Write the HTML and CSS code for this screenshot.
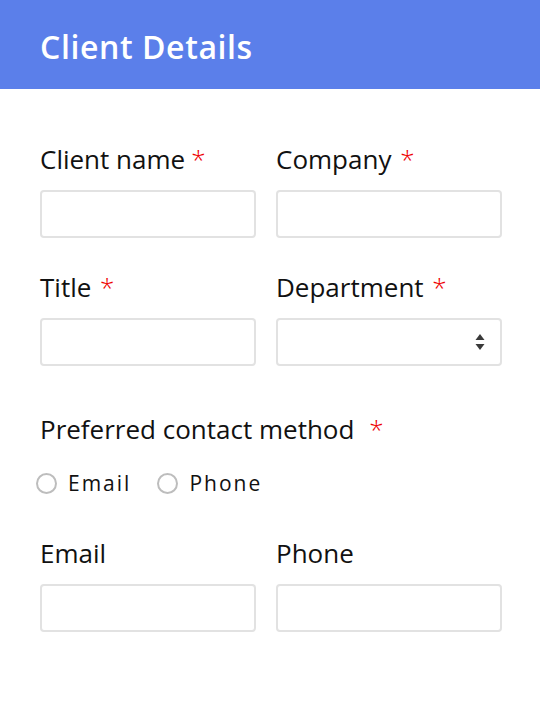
FILE: index.html
```html
<!DOCTYPE html>
<html>

<head>
  <meta charset="utf-8" />
  <title>Client Details</title>
  <link rel="stylesheet" href="styles.css">
</head>

<body>
  <div class="header">
    <h1>Client Details</h1>
  </div>

  <form class="form">
    <div class="row">
      <div class="field">
        <label>Client name<span class="req req-tight">*</span></label>
        <input type="text" class="box box-narrow" />
      </div>
      <div class="field">
        <label>Company <span class="req">*</span></label>
        <input type="text" class="box box-wide" />
      </div>
    </div>

    <div class="row">
      <div class="field">
        <label>Title <span class="req">*</span></label>
        <input type="text" class="box box-narrow" />
      </div>
      <div class="field">
        <label>Department <span class="req">*</span></label>
        <div class="box box-wide select">
          <svg class="arrows" width="10" height="18" viewBox="0 0 10 18">
            <path d="M5 1 L9.5 7 H0.5 Z" fill="#3a3a3a" />
            <path d="M5 17 L9.5 11 H0.5 Z" fill="#3a3a3a" />
          </svg>
        </div>
      </div>
    </div>

    <div class="contact">
      <label>Preferred contact method <span class="req req-wide">*</span></label>
      <div class="radios">
        <span class="radio"><i class="circle"></i>Email</span>
        <span class="radio"><i class="circle"></i>Phone</span>
      </div>
    </div>

    <div class="row">
      <div class="field">
        <label>Email</label>
        <input type="text" class="box box-narrow" />
      </div>
      <div class="field">
        <label>Phone</label>
        <input type="text" class="box box-wide" />
      </div>
    </div>
  </form>
</body>

</html>
```

FILE: styles.css
```css
body {
  margin: 0;
  font-family: "Open Sans", "Noto Sans", sans-serif;
  color: #111;
  background: #fff;
}

.header {
  box-sizing: border-box;
  height: 89px;
  background: #5b7fea;
  padding: 3px 40px 0;
  display: flex;
  align-items: center;
}

.header h1 {
  margin: 0;
  color: #fff;
  font-size: 32px;
  font-weight: 600;
  letter-spacing: 0.6px;
}

.form {
  padding: 53px 40px 0;
}

.row {
  display: grid;
  grid-template-columns: 216px 226px;
  column-gap: 20px;
  margin-bottom: 32px;
}

.field label,
.contact label {
  display: block;
  font-size: 26px;
  line-height: 34px;
  margin-bottom: 14px;
}

.req {
  color: #e00;
  font-weight: 300;
  margin-left: 2px;
}

.req-tight {
  margin-left: 6px;
}

.req-wide {
  margin-left: 8px;
}

.box {
  display: block;
  box-sizing: border-box;
  height: 48px;
  border: 2px solid #e2e2e2;
  border-radius: 4px;
  background: #fff;
  margin: 0;
  padding: 0 12px;
  font: inherit;
}

.box-narrow {
  width: 216px;
}

.box-wide {
  width: 226px;
}

.select {
  display: flex;
  align-items: center;
  justify-content: flex-end;
  padding-right: 15px;
}

.contact {
  margin-top: 46px;
  margin-bottom: 39px;
}

.contact label {
  margin-bottom: 23px;
}

.radios {
  display: flex;
  gap: 26px;
  margin-left: -4px;
}

.radio {
  display: flex;
  align-items: center;
  font-size: 21px;
  letter-spacing: 2px;
}

.circle {
  box-sizing: border-box;
  width: 21px;
  height: 21px;
  border: 2px solid #bdbdbd;
  border-radius: 50%;
  margin-right: 11px;
}
```
